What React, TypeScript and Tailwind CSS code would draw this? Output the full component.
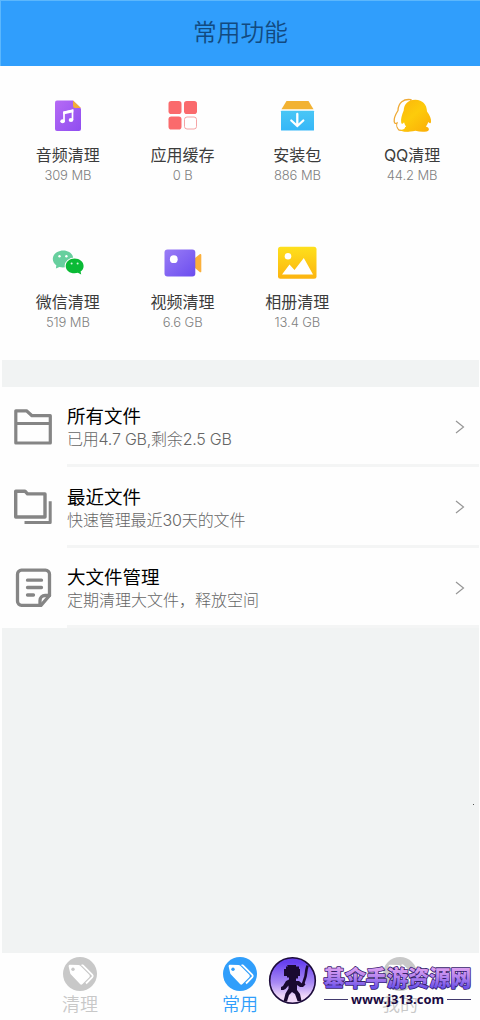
import React from "react";

const cjk = "font-['Noto_Sans_CJK_SC',sans-serif]";
const mixed = "font-[Inter,'Noto_Sans_CJK_SC',sans-serif]";

function AudioIcon() {
  return (
    <svg width="40" height="40" viewBox="0 0 40 40">
      <defs>
        <linearGradient id="audio" x1="0" y1="0" x2="1" y2="1">
          <stop offset="0" stopColor="#b66bf5" />
          <stop offset="1" stopColor="#8f4df0" />
        </linearGradient>
      </defs>
      <path d="M9 4.500h16l8 8v20.500a2 2 0 0 1-2 2H9a2 2 0 0 1-2-2V6.500a2 2 0 0 1 2-2z" fill="url(#audio)" />
      <path d="M25 4.500l8 7.500h-6a2 2 0 0 1-2-2z" fill="#f3ac35" />
      <path d="M16 25.500V16.500l8.500-2v9.500" fill="none" stroke="#fff" strokeWidth="1.700" />
      <path d="M15.200 15.500l10.100-2.300v3l-10.100 2.300z" fill="#fff" />
      <ellipse cx="14.600" cy="25.300" rx="2.300" ry="2" fill="#fff" />
      <ellipse cx="23" cy="24" rx="2.300" ry="2" fill="#fff" />
    </svg>
  );
}

function AppsIcon() {
  return (
    <svg width="40" height="40" viewBox="0 0 40 40">
      <g fill="#fa6a6c">
        <rect x="5.500" y="5" width="13" height="13" rx="2.800" />
        <rect x="21" y="5" width="13" height="13" rx="2.800" />
        <rect x="5.500" y="20.500" width="13" height="13" rx="2.800" />
      </g>
      <rect x="21.500" y="21" width="12" height="12" rx="2.500" fill="#fff" stroke="#f49a9b" strokeWidth="0.900" />
    </svg>
  );
}

function PackageIcon() {
  return (
    <svg width="40" height="40" viewBox="0 0 40 40">
      <defs>
        <linearGradient id="box" x1="0" y1="0" x2="0" y2="1">
          <stop offset="0" stopColor="#49c6f5" />
          <stop offset="1" stopColor="#36b7f8" />
        </linearGradient>
      </defs>
      <path d="M9.500 5h22l5 8.300h-32z" fill="#f2b232" />
      <rect x="4" y="14.800" width="33" height="19.700" rx="0.500" fill="url(#box)" />
      <path d="M20.300 18v11.500M14.300 24.500l6 5.500 6-5.500" fill="none" stroke="#fff" strokeWidth="2.300" strokeLinecap="round" />
    </svg>
  );
}

function PenguinIcon() {
  return (
    <svg width="40" height="40" viewBox="0 0 40 40">
      <defs>
        <linearGradient id="qq" x1="0" y1="0" x2="0.800" y2="1">
          <stop offset="0" stopColor="#fbb50c" />
          <stop offset="0.500" stopColor="#fdcb0b" />
          <stop offset="1" stopColor="#fbb108" />
        </linearGradient>
      </defs>
      <path d="M19 3.700C11.500 2.500 6.300 7 6 14.500 3.500 18.500 1.800 22.500 2.200 25.500c.3 2 1.300 2.400 2.800 1.500-.6 3 .2 5.300 2 7l9 .8z" fill="#fff" stroke="#efaa35" strokeWidth="1.300" />
      <path d="M23.500 3.700C16.500 3.500 12 7.800 11.700 14.500 9.800 19 8.600 23 9.200 26.500c.3 2 1.800 1.500 2.800-.2.500 1.800 1.200 3.200 2.200 4.500L8.500 32.300c-.7 2.700 2 3.500 5.500 3.500 3 0 6-.2 9.500-1 3 .8 6 1.100 9 .9 3.600-.2 5-1.600 4.200-3.300-.4-1-1.500-1.300-2.700-1.600 1.100-1.500 1.700-3 2.200-4.700 1.200 1.400 2.500 1.800 2.800-.2.400-3.200-1.200-6.700-4-10.500C34.800 8.200 30.500 3.900 23.500 3.700z" fill="url(#qq)" />
      <path d="M6 27.200c.7 2.200 2.200 3 4.700 2.300 2.400-.4 3.200 2 1.300 3.500-1.800 1-4.200.8-5.300-.5-1.500-1.500-2-3.600-.7-5.300zM34.500 30.200c.2-1.500 1.500-2.700 3.500-2.800l-1 3.700z" fill="#fff" />
    </svg>
  );
}

function ChatIcon() {
  return (
    <svg width="40" height="40" viewBox="0 0 40 40">
      <path d="M15.300 7.500c-5.800 0-10.500 3.800-10.500 8.500 0 2.600 1.300 4.800 3.500 6.300l-.4 3.200 3.500-1.500c1 .3 2.200.5 3.400.5 5.800 0 10.500-3.800 10.500-8.500s-4.200-8.500-10-8.500z" fill="#67cf9e" />
      <ellipse cx="26.600" cy="22.900" rx="10" ry="8.500" fill="#fff" />
      <path d="M26.600 15.400c-5 0-8.900 3.300-8.900 7.500s3.900 7.400 8.900 7.400c1.200 0 2.300-.2 3.300-.5l3.300 1.700-.6-3c1.900-1.400 3-3.300 3-5.600 0-4.200-4-7.500-9-7.500z" fill="#0aba35" />
      <circle cx="11.500" cy="13.300" r="1.200" fill="#fff" />
      <circle cx="18.400" cy="13.300" r="1.200" fill="#fff" />
      <circle cx="23.600" cy="20.500" r="1" fill="#d4f4db" />
      <circle cx="29.600" cy="20.500" r="1" fill="#d4f4db" />
    </svg>
  );
}

function VideoIcon() {
  return (
    <svg width="40" height="40" viewBox="0 0 40 40">
      <defs>
        <linearGradient id="video" x1="0" y1="0" x2="1" y2="1">
          <stop offset="0" stopColor="#9a7df6" />
          <stop offset="1" stopColor="#6b4def" />
        </linearGradient>
      </defs>
      <path d="M32 15l5-3.900c.6-.4 1.300 0 1.300.8v16.500c0 .8-.7 1.200-1.300.8L32 25z" fill="#fbb03b" />
      <rect x="1.500" y="6.500" width="30.800" height="27" rx="3" fill="url(#video)" />
      <circle cx="10.800" cy="16.200" r="3.900" fill="#fff" />
    </svg>
  );
}

function PhotoIcon() {
  return (
    <svg width="40" height="40" viewBox="0 0 40 40">
      <defs>
        <linearGradient id="photo" x1="0" y1="0" x2="0" y2="1">
          <stop offset="0" stopColor="#fee01c" />
          <stop offset="1" stopColor="#fcb410" />
        </linearGradient>
      </defs>
      <rect x="1" y="3.700" width="38.500" height="32" rx="2.500" fill="url(#photo)" />
      <circle cx="11" cy="13.300" r="3.300" fill="#fff" />
      <path d="M5 31.500l7.500-10 5 5.500 9.300-12 9.200 16.500z" fill="#fff" />
    </svg>
  );
}

function FolderIcon() {
  return (
    <svg width="40" height="40" viewBox="0 0 40 40" fill="none" stroke="#858585" strokeWidth="3.200" strokeLinejoin="round">
      <path d="M2.800 3.800H13.500L19 8.700H37.300V36H2.800zM2.800 16.500H37.300" />
    </svg>
  );
}

function FoldersIcon() {
  return (
    <svg width="40" height="40" viewBox="0 0 40 40" fill="none" stroke="#858585" strokeWidth="3.400" strokeLinejoin="round">
      <path d="M2.700 4.200H12L14.500 6.900H32V30H2.700z" />
      <path d="M37.200 14.300V35.400H11.500" strokeWidth="3" strokeLinecap="butt" />
    </svg>
  );
}

function NoteIcon() {
  return (
    <svg width="40" height="40" viewBox="0 0 40 40" fill="none" stroke="#858585" strokeWidth="3.300" strokeLinecap="round" strokeLinejoin="round">
      <path d="M8.500 2.200H32.500a4 4 0 0 1 4 4V27.500l-8.500 9.800H8.500a4 4 0 0 1-4-4V6.200a4 4 0 0 1 4-4z" />
      <path d="M27 37V32.500a5 5 0 0 1 5-5H36.500" />
      <path d="M14.500 12.200H28.500M14.500 19.500H28.500M14.500 27H20.500" />
    </svg>
  );
}

function TagIcon() {
  return (
    <svg width="34" height="34" viewBox="0 0 34 34">
      <circle cx="17" cy="17" r="17" fill="currentColor" />
      <path d="M7 7.800l8.500.2q1 0 1.800.8l9 9q1.200 1.300 0 2.500l-6.800 6.800q-1.300 1.200-2.500 0l-9-9.500q-.8-.8-.9-1.800L5.600 9.200Q5.600 7.800 7 7.800z" fill="#fff" />
      <circle cx="10" cy="12.300" r="1.700" fill="currentColor" />
      <path d="M18.500 8l1.500.5 9.300 9.300q1 1.200 0 2.300L23 26.500" fill="none" stroke="#fff" strokeWidth="1.800" />
    </svg>
  );
}

const tools = [
  { name: "音频清理", size: "309 MB", icon: <AudioIcon /> },
  { name: "应用缓存", size: "0 B", icon: <AppsIcon /> },
  { name: "安装包", size: "886 MB", icon: <PackageIcon /> },
  { name: "QQ清理", size: "44.2 MB", icon: <PenguinIcon /> },
  { name: "微信清理", size: "519 MB", icon: <ChatIcon /> },
  { name: "视频清理", size: "6.6 GB", icon: <VideoIcon /> },
  { name: "相册清理", size: "13.4 GB", icon: <PhotoIcon /> },
];

const files = [
  { name: "所有文件", note: "已用4.7 GB,剩余2.5 GB", tracking: "tracking-[-0.22px]", icon: <FolderIcon /> },
  { name: "最近文件", note: "快速管理最近30天的文件", tracking: "tracking-[-0.1px]", icon: <FoldersIcon /> },
  { name: "大文件管理", note: "定期清理大文件，释放空间", tracking: "tracking-normal", icon: <NoteIcon /> },
];

function Watermark() {
  return (
    <div className="absolute top-[955px] left-[268px] flex h-[60px] w-[210px]">
      <svg className="shrink-0" width="50" height="50" viewBox="0 0 50 50">
        <defs>
          <linearGradient id="badge" x1="0" y1="0" x2="0" y2="1">
            <stop offset="0.100" stopColor="#6740ee" />
            <stop offset="0.550" stopColor="#a98af4" />
            <stop offset="0.850" stopColor="#f0d8f8" />
          </linearGradient>
        </defs>
        <circle cx="24.500" cy="25.500" r="22.800" fill="url(#badge)" stroke="#1c0b3b" strokeWidth="1.600" />
        <path d="M19 10h9v1.500h3V14h1v7h-2v2.500h-2V26h3l3 2.500 2-1 1.500 2-2.500 2.500h-3l-3-2v5l3 4 1.500 7h-4l-2.500-7-3-2-3 3-2 6.500h-3.500l2-8 3-5v-3l-3 3.500-2 1h-2.500v-3l2-1 3-5 3-1.500v-2h-2V21h-3v-7h2v-2.500h2z" fill="#1a0930" />
        <path d="M39.500 10.500l-1 4-1 7-3 9" fill="none" stroke="#1a0930" strokeWidth="2.600" />
      </svg>
      <div className="flex flex-col pl-[4px]">
        <svg className="mt-[4px]" width="156" height="34" viewBox="0 0 156 34">
          <defs>
            <linearGradient id="brand" gradientUnits="userSpaceOnUse" x1="0" y1="8" x2="0" y2="29">
              <stop offset="0" stopColor="#e0a3f0" />
              <stop offset="0.450" stopColor="#b886ef" />
              <stop offset="1" stopColor="#6950e8" />
            </linearGradient>
          </defs>
          <text x="1.500" y="27" textLength="148" lengthAdjust="spacingAndGlyphs" fontSize="22" fontWeight="900" fill="url(#brand)" stroke="#35206b" strokeWidth="1.600" strokeLinejoin="round" paintOrder="stroke" className="font-['Noto_Sans_CJK_SC',sans-serif]">
            基伞手游资源网
          </text>
        </svg>
        <div className="-mt-[4px] ml-[2px] flex h-[20px] w-[147px] items-center justify-between">
          <span className="h-px w-[24px] bg-[#41396d]" />
          <span className="font-['Noto_Sans',sans-serif] text-[12.900px] leading-[20px] font-bold text-[#1b0b42]">www.j313.com</span>
          <span className="h-px w-[24px] bg-[#41396d]" />
        </div>
      </div>
    </div>
  );
}

export default function App() {
  return (
    <div className={`relative flex h-[1020px] w-[480px] flex-col overflow-hidden bg-[#fefefe] ${cjk}`}>
      <header className="flex h-[65.500px] shrink-0 items-center justify-center border-t border-l border-[#5cb7fc] bg-[#309efc] pb-[3px] text-[23.700px] font-[350] text-[#124a80]">
        常用功能
      </header>

      <section className="grid h-[294.500px] shrink-0 grid-cols-4 content-start px-[10.500px] pt-[30px]">
        {tools.map((t) => (
          <div key={t.name} className="flex h-[147px] flex-col items-center">
            {t.icon}
            <span className={`${mixed} mt-[9px] text-[16px] leading-[20px] text-[#3c3c3c]`}>{t.name}</span>
            <span className="mt-px font-[Inter,sans-serif] text-[13px] leading-[19px] font-light tracking-[-0.1px] text-[#808080]">{t.size}</span>
          </div>
        ))}
      </section>

      <main className="mr-px flex min-h-0 flex-1 flex-col">
        <div className="ml-[2px] h-[26.500px] shrink-0 bg-[#f1f3f3]" />
        {files.map((f) => (
          <div key={f.name} className="flex h-[80.500px] shrink-0">
            <div className="flex w-[67px] shrink-0 items-center pl-[13px]">{f.icon}</div>
            <div className="flex flex-1 items-center border-b-[3px] border-[#f4f5f5]">
              <div className="flex flex-1 flex-col pt-[5px]">
                <span className="text-[18.500px] leading-[24px] text-black">{f.name}</span>
                <span className={`${mixed} ${f.tracking} text-[16px] leading-[25px] font-light text-[#666]`}>{f.note}</span>
              </div>
              <svg className="mt-[3px] mr-[14px]" width="10" height="14" viewBox="0 0 10 14" fill="none" stroke="#969696" strokeWidth="1.200">
                <path d="M1 1l7.500 6-7.500 6" />
              </svg>
            </div>
          </div>
        ))}
        <div className="ml-[2px] flex flex-1 justify-end bg-[#f1f3f3]">
          <span className="mt-[176px] mr-[5px] h-px w-px bg-[#555]" />
        </div>
      </main>

      <nav className="grid h-[67px] shrink-0 grid-cols-3">
        {["清理", "常用", "我的"].map((label, i) => (
          <div key={label} className={`flex flex-col items-center pt-[4px] ${i === 1 ? "text-[#309efb]" : "text-[#c8c8c8]"}`}>
            <TagIcon />
            <span className="-mt-px text-[18px] leading-[26px] font-[350]">{label}</span>
          </div>
        ))}
      </nav>
      <Watermark />
    </div>
  );
}
